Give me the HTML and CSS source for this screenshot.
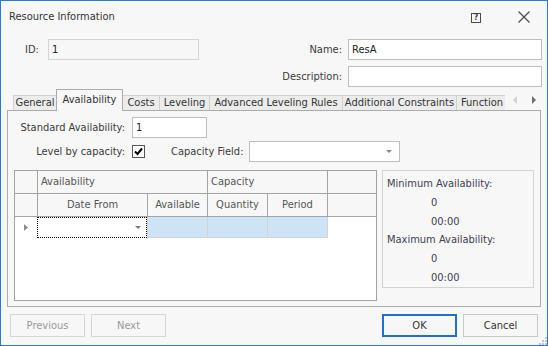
FILE: index.html
```html
<!DOCTYPE html>
<html lang="en">
<head>
  <meta charset="UTF-8">
  <title>Resource Information</title>
  <link rel="stylesheet" href="styles.css">
</head>
<body>

  <div class="window">
    <div class="titlebar">
      <span class="title">Resource Information</span>
      <span class="help-btn">?</span>
      <svg class="close-btn" width="12" height="12" viewBox="0 0 12 12">
        <path d="M0.5 0.5 L11.5 11.5 M11.5 0.5 L0.5 11.5" stroke="#4a4a4a" stroke-width="1.2" fill="none"/>
      </svg>
    </div>

    <div class="head-form">
      <div class="form-row">
        <label class="id-label">ID:</label>
        <div class="edit edit-readonly id-edit">1</div>
        <label class="right-label">Name:</label>
        <div class="edit wide-edit">ResA</div>
      </div>
      <div class="form-row">
        <label class="right-label">Description:</label>
        <div class="edit wide-edit"></div>
      </div>
    </div>

    <div class="tab-strip">
      <span class="tab tab-general">General</span>
      <span class="tab tab-active">Availability</span>
      <span class="tab tab-costs">Costs</span>
      <span class="tab tab-leveling">Leveling</span>
      <span class="tab tab-advanced">Advanced Leveling Rules</span>
      <span class="tab tab-constraints">Additional Constraints</span>
      <span class="tab tab-function">Function</span>
      <span class="tab-scroll">
        <svg width="5" height="8" viewBox="0 0 5 8"><path d="M4 0 L0 4 L4 8 Z" fill="#d2d2d2"/></svg>
        <svg width="5" height="8" viewBox="0 0 5 8"><path d="M0 0 L4 4 L0 8 Z" fill="#6e6e6e"/></svg>
      </span>
    </div>

    <div class="tab-page">
      <div class="field-row">
        <label class="page-label">Standard Availability:</label>
        <div class="edit std-edit">1</div>
      </div>
      <div class="field-row">
        <label class="page-label">Level by capacity:</label>
        <span class="checkbox">
          <svg width="9" height="9" viewBox="0 0 9 9"><path d="M1 4.5 L3.5 7 L8 1.5" stroke="#000" stroke-width="2" fill="none"/></svg>
        </span>
        <label class="cap-label">Capacity Field:</label>
        <div class="edit combo">
          <svg width="6" height="3" viewBox="0 0 6 3"><path d="M0 0 L6 0 L3 3 Z" fill="#8a8a8a"/></svg>
        </div>
      </div>

      <div class="lower">
        <div class="grid">
          <div class="grid-head">
            <div class="hcell"></div>
            <div class="hcell band band-avail">Availability</div>
            <div class="hcell band band-cap">Capacity</div>
            <div class="hcell hcell-last"></div>
            <div class="hcell"></div>
            <div class="hcell col">Date From</div>
            <div class="hcell col">Available</div>
            <div class="hcell col">Quantity</div>
            <div class="hcell col">Period</div>
            <div class="hcell hcell-last"></div>
          </div>
          <div class="grid-row">
            <div class="row-ind">
              <svg width="4" height="7" viewBox="0 0 4 7"><path d="M0 0 L4 3.5 L0 7 Z" fill="#8c8c8c"/></svg>
            </div>
            <div class="cell cell-date">
              <svg width="6" height="3" viewBox="0 0 6 3"><path d="M0 0 L6 0 L3 3 Z" fill="#7a7a7a"/></svg>
            </div>
            <div class="cell cell-sel cell-first"></div>
            <div class="cell cell-sel"></div>
            <div class="cell cell-sel"></div>
          </div>
        </div>

        <div class="avail-panel">
          <div>Minimum Availability:</div>
          <div class="val">0</div>
          <div class="val">00:00</div>
          <div>Maximum Availability:</div>
          <div class="val">0</div>
          <div class="val">00:00</div>
        </div>
      </div>
    </div>

    <div class="footer">
      <button class="btn" disabled>Previous</button>
      <button class="btn" disabled>Next</button>
      <span class="spacer"></span>
      <button class="btn btn-default">OK</button>
      <button class="btn">Cancel</button>
    </div>

    <svg class="grip" width="9" height="9" viewBox="0 0 9 9">
      <rect x="7" y="1" width="2" height="2" fill="#c4c4c4"/>
      <rect x="4" y="4" width="2" height="2" fill="#c4c4c4"/>
      <rect x="7" y="4" width="2" height="2" fill="#c4c4c4"/>
      <rect x="1" y="7" width="2" height="2" fill="#c4c4c4"/>
      <rect x="4" y="7" width="2" height="2" fill="#c4c4c4"/>
      <rect x="7" y="7" width="2" height="2" fill="#c4c4c4"/>
    </svg>
  </div>

</body>
</html>
```
FILE: styles.css
```css
* {
  box-sizing: border-box;
}
body {
  margin: 0;
  background: #f7f7f7;
  font-family: "DejaVu Sans Condensed", "DejaVu Sans", sans-serif;
  font-size: 11px;
  color: #3a3a3a;
}
.window {
  position: relative;
  width: 548px;
  height: 346px;
  border: 1px solid #2a7ad3;
  background: #f7f7f7;
}

/* title bar */
.titlebar {
  display: flex;
  align-items: center;
  height: 31px;
  padding-left: 8px;
}
.title {
  flex: 1;
  font-size: 11px;
  color: #333;
}
.help-btn {
  width: 10px;
  height: 10px;
  border: 1px solid #4a4a4a;
  font-size: 8px;
  font-weight: bold;
  line-height: 8px;
  text-align: center;
  color: #3a3a3a;
  margin-top: 2px;
}
.close-btn {
  margin: 1px 17px 0 37px;
}

/* id / name / description */
.head-form {
  padding: 7px 5px 0 24px;
}
.form-row {
  display: flex;
  align-items: center;
  justify-content: flex-end;
  height: 21px;
  margin-bottom: 6px;
}
.form-row:last-child {
  margin-bottom: 0;
}
.id-label {
  width: 23px;
}
.id-edit {
  width: 151px;
  margin-right: auto;
}
.right-label {
  padding-right: 6px;
}
.edit {
  height: 21px;
  border: 1px solid #bdbdbd;
  background: #fff;
  padding-left: 3px;
  line-height: 19px;
  color: #222;
}
.edit-readonly {
  background: #f7f7f7;
  border-color: #d4d4d4;
}
.wide-edit {
  width: 194px;
}

/* tabs */
.tab-strip {
  display: flex;
  align-items: flex-end;
  height: 21px;
  margin: 2px 6px 0 12px;
}
.tab {
  height: 15px;
  line-height: 14px;
  text-align: center;
  background: #ececec;
  border: 1px solid #d0d0d0;
  border-bottom: none;
  border-left: none;
  color: #333;
  white-space: nowrap;
}
.tab-general {
  width: 44px;
  border-left: 1px solid #d0d0d0;
}
.tab-active {
  position: relative;
  z-index: 1;
  width: 67px;
  height: 22px;
  margin-bottom: -1px;
  line-height: 20px;
  padding-bottom: 2px;
  background: #f7f7f7;
  border: 1px solid #ababab;
  border-bottom: none;
  margin-left: -1px;
}
.tab-costs {
  width: 37px;
}
.tab-leveling {
  width: 50px;
}
.tab-advanced {
  width: 133px;
}
.tab-constraints {
  width: 114px;
}
.tab-function {
  width: 48px;
  border-right: none;
  overflow: hidden;
  text-align: left;
  padding-left: 4px;
}
.tab-scroll {
  display: flex;
  gap: 14px;
  align-self: center;
  margin-left: 8px;
  padding-top: 1px;
}

/* tab page */
.tab-page {
  height: 197px;
  margin: 0 6px;
  border: 1px solid #ababab;
  padding: 6px 6px 0 6px;
}
.field-row {
  display: flex;
  align-items: center;
  height: 21px;
  margin-bottom: 3px;
}
.page-label {
  width: 112px;
  text-align: right;
  padding-right: 1px;
  margin-right: 6px;
}
.std-edit {
  width: 75px;
}
.checkbox {
  display: flex;
  align-items: center;
  justify-content: center;
  width: 13px;
  height: 13px;
  border: 1px solid #555;
  background: #fff;
}
.cap-label {
  margin: 0 5px 0 26px;
}
.combo {
  display: flex;
  align-items: center;
  justify-content: flex-end;
  width: 151px;
  padding-right: 7px;
}

.lower {
  display: flex;
  gap: 5px;
  margin-top: 8px;
  align-items: flex-start;
}

/* grid */
.grid {
  width: 363px;
  height: 131px;
  border: 1px solid #a3a3a3;
  background: #fff;
}
.grid-head {
  display: grid;
  grid-template-columns: 23px 110px 60px 60px 60px 48px;
  grid-template-rows: 23px 23px;
}
.hcell {
  background: #f7f7f7;
  border-right: 1px solid #a3a3a3;
  border-bottom: 1px solid #a3a3a3;
  color: #555;
  line-height: 22px;
  white-space: nowrap;
}
.hcell-last {
  border-right: none;
}
.band {
  grid-column: span 2;
  padding-left: 3px;
}
.col {
  text-align: center;
}
.grid-row {
  display: grid;
  grid-template-columns: 22px 110px 61px 60px 60px;
  height: 21px;
}
.row-ind {
  display: flex;
  align-items: center;
  padding-left: 9px;
}
.cell {
  border-bottom: 1px solid #d3d3d3;
  border-right: 1px solid #d3d3d3;
}
.cell-date {
  display: flex;
  align-items: center;
  justify-content: flex-end;
  padding-right: 5px;
  border: 1px dotted #000;
  background: #fff;
}
.cell-sel {
  background: #cde4f7;
}
.cell-first {
  border-left: 1px solid #d3d3d3;
}

/* min / max panel */
.avail-panel {
  width: 152px;
  height: 118px;
  border: 1px solid #d3d3d3;
  padding: 4px 0 0 4px;
  line-height: 18.8px;
  color: #404050;
}
.val {
  padding-left: 44px;
}

/* buttons */
.footer {
  display: flex;
  gap: 6px;
  padding: 7px 9px 0 9px;
}
.spacer {
  flex: 1;
}
.btn {
  width: 75px;
  height: 23px;
  font-family: inherit;
  font-size: 11px;
  color: #333;
  background: #f7f7f7;
  border: 1px solid #c8c8c8;
  padding: 0;
}
.btn:disabled {
  color: #999;
  border-color: #d6d6d6;
}
.btn-default {
  border: 2px solid #1f70c9;
}

.grip {
  position: absolute;
  right: 0;
  bottom: 0;
}
```
